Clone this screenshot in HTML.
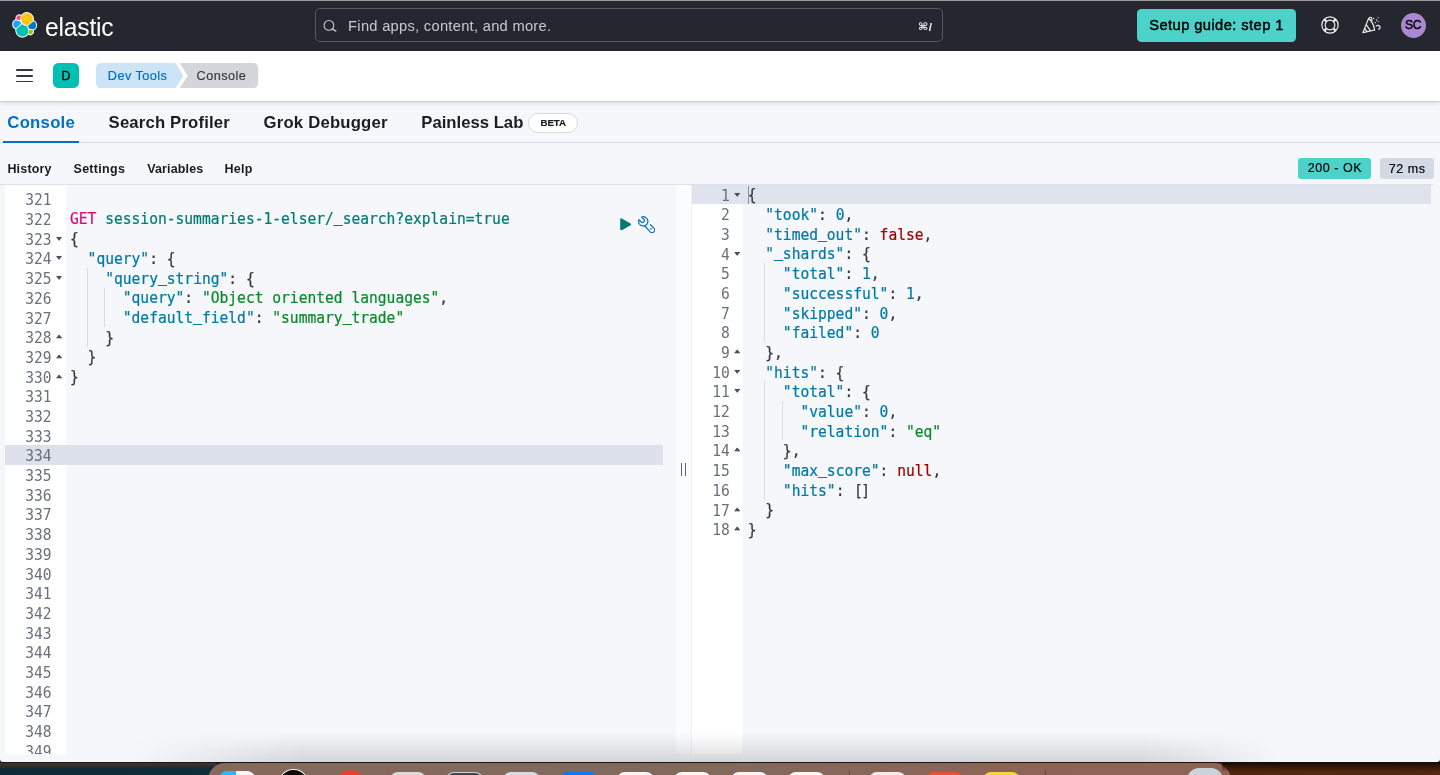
<!DOCTYPE html>
<html lang="en">
<head>
<meta charset="utf-8">
<title>Console - Dev Tools - Elastic</title>
<style>
*{box-sizing:border-box;margin:0;padding:0}
html,body{width:1440px;height:775px;overflow:hidden}
body{background:#1a2a33;font-family:"Liberation Sans",sans-serif;color:#1a1c21;position:relative}
.abs{position:absolute}
/* desktop strip under the browser window */
#desk{position:absolute;left:0;top:740px;width:1440px;height:35px;background:linear-gradient(to right,#0e2937 0,#102d3b 208px,#50260f 1231px,#52260f 1440px)}
#desk:before{content:"";position:absolute;left:0;top:21.500px;width:216px;height:6.400px;background:linear-gradient(to bottom,#3d3a38,#2a2725)}
#desk:after{content:"";position:absolute;left:1222px;top:21.500px;width:218px;height:10px;background:linear-gradient(to bottom,rgba(8,4,2,.95) 0,rgba(20,8,3,.7) 25%,rgba(30,12,4,0) 100%)}
#dock{position:absolute;left:207.500px;top:22.600px;width:1023px;height:40px;border-radius:17px;background:linear-gradient(to right,#86695b 0,#7f6a5d 38%,#86675a 62%,#8e6355 82%,#8f6254 100%)}
.dk{position:absolute;height:14px;border-radius:8px 8px 0 0}
.dks{position:absolute;top:7.500px;width:1px;height:10px;background:#5d4a42}
/* browser window */
#win{will-change:transform;position:absolute;left:0;top:0;width:1440px;height:761.500px;background:#f6f7fb;border-radius:0 0 3px 3px;overflow:hidden;box-shadow:0 .8px 0 .2px rgba(20,20,20,.9)}
#topline{position:absolute;left:0;top:0;width:1440px;height:1.4px;background:#9b9b9b}
#hdr1{position:absolute;left:0;top:1px;width:1440px;height:49.800px;background:#25272f}
#hdr2{position:absolute;left:0;top:50.800px;width:1440px;height:49.900px;background:#fff;box-shadow:0 1px 1.500px rgba(60,70,90,.2),0 3px 5px rgba(60,70,90,.1)}
.t{position:absolute;white-space:nowrap;line-height:1}

#logo{position:absolute;left:11.700px;top:11.200px;width:25.300px;height:25.800px}
#wordmark{position:absolute;left:44.500px;top:10.700px;font-size:26.2px;line-height:31px;color:#fff;letter-spacing:-.2px;transform:scaleX(.94);transform-origin:0 50%;white-space:nowrap}
#search{position:absolute;left:314.500px;top:7.400px;width:628.500px;height:33.800px;border:1.100px solid #565862;border-radius:4.800px;background:#25272f}
#search svg{position:absolute;left:7.600px;top:10.900px;width:15px;height:14px}
#ph{position:absolute;left:32.600px;top:8.400px;font-size:14.7px;line-height:17px;color:#c6c8cc;white-space:nowrap;letter-spacing:.28px}
#kbd{position:absolute;right:10px;top:10.300px;font-size:11.600px;line-height:14px;font-weight:bold;color:#f0f1f3;white-space:nowrap}
#kbd b{font-family:"DejaVu Sans","Liberation Sans",sans-serif;font-size:11px;position:relative;top:-.3px;margin-right:.5px;display:inline-block;transform:scaleY(.92)}
#guide{position:absolute;left:1136.7px;top:7.6px;width:159.4px;height:33.5px;border-radius:4.5px;background:#4dd2ca;color:#000}
#guidet{position:absolute;left:12.600px;top:8.900px;font-size:14.700px;line-height:17px;white-space:nowrap;letter-spacing:.42px;-webkit-text-stroke:.45px #000}
#help{position:absolute;left:1319.6px;top:14.350px;width:20px;height:20px}
#cheer{position:absolute;left:1361px;top:14px;width:20px;height:19px}
#avatar{position:absolute;left:1400.6px;top:11.6px;width:25.4px;height:25.4px;border-radius:50%;background:#a987d1}
#avt{position:absolute;left:0;top:6.2px;width:25.4px;text-align:center;font-size:12.200px;line-height:13px;color:#000;letter-spacing:-.5px;text-indent:-.5px;-webkit-text-stroke:.4px #000}

#burger{position:absolute;left:16px;top:18.4px;width:17px;height:14px}
#burger i{position:absolute;left:0;width:17px;height:1.8px;background:#343741;border-radius:1px}
#space{position:absolute;left:53.4px;top:12.4px;width:25.3px;height:25.3px;border-radius:5.5px;background:#00bfb3}
#spacet{position:absolute;left:0;top:6.6px;width:25.3px;text-align:center;font-size:12.4px;line-height:13px;color:#000;-webkit-text-stroke:.3px #000}
#crumbs{position:absolute;left:95.6px;top:12.4px;height:25.3px;width:170px}
#crumbs svg{position:absolute;left:0;top:0;width:170px;height:25.3px}
#bc1{position:absolute;left:12.2px;top:5.9px;font-size:12.7px;line-height:14px;color:#0071c2;letter-spacing:.46px;white-space:nowrap;-webkit-text-stroke:.2px #0071c2}
#bc2{position:absolute;left:101px;top:5.9px;font-size:12.7px;line-height:14px;color:#343741;letter-spacing:.43px;white-space:nowrap;-webkit-text-stroke:.15px #343741}

#tabs{position:absolute;left:0;top:101px;width:1440px;height:42.300px;border-bottom:1px solid #d3dae6}
.tab{position:absolute;top:12.3px;font-size:16.700px;line-height:20px;font-weight:bold;color:#1a1c21;white-space:nowrap}
#tab1{left:7.300px;color:#0071c2;letter-spacing:.28px}
#tabline{position:absolute;left:3.300px;top:39.700px;width:75.700px;height:2.300px;background:#0071c2}
#beta{position:absolute;left:528.300px;top:12.400px;width:49.800px;height:20.100px;border:1px solid #d3dae6;border-radius:10.100px;background:#fff}
#betat{position:absolute;left:0;top:3.700px;width:47.800px;text-align:center;font-size:9.700px;line-height:10px;font-weight:bold;letter-spacing:-.1px;-webkit-text-stroke:.2px #1a1c21;color:#1a1c21}
#menu{position:absolute;left:0;top:143.300px;width:1440px;height:41px}
.mi{position:absolute;top:18.300px;font-size:12.500px;line-height:15px;font-weight:bold;color:#1a1c21;white-space:nowrap}
#ok{position:absolute;left:1298.300px;top:14.500px;width:73px;height:20.800px;border-radius:3.200px;background:#4dd2ca}
#ms{position:absolute;left:1379.700px;top:15px;width:54.400px;height:20.300px;border-radius:3.200px;background:#d3dae6}
.bt{position:absolute;top:3.300px;left:0;width:100%;text-align:center;font-size:12.500px;line-height:14px;color:#000;white-space:nowrap;letter-spacing:.54px;text-indent:.5px;-webkit-text-stroke:.2px #000}#shade{position:absolute;left:130px;top:732px;width:1150px;height:30px;background:linear-gradient(to bottom,rgba(20,22,30,0) 0,rgba(20,22,30,.05) 35%,rgba(20,22,30,.115) 75%,rgba(20,22,30,.15) 100%);-webkit-mask-image:linear-gradient(to right,transparent 0,#000 15%,#000 88%,transparent 100%);mask-image:linear-gradient(to right,transparent 0,#000 15%,#000 88%,transparent 100%);pointer-events:none}/*ED*/
#edline{position:absolute;left:0;top:183.7px;width:1434px;height:1px;background:#dde2ea}
.ed{position:absolute;top:184.5px;height:569.1px;overflow:hidden;font-family:"DejaVu Sans Mono","Liberation Mono",monospace;font-size:14.62px;line-height:19.69px;color:#343741;-webkit-text-stroke:.22px currentColor}
#edL{left:4.5px;width:671.4px;background:#f5f7fa}
#edR{left:690.6px;width:743.4px;background:#f6f7fb}
.gut{position:absolute;left:0;top:0;height:100%;background:#fff;color:#69707d}
#edL .gut,.gutbg{width:61.2px}
.gutbg{position:absolute;left:0;top:0;height:100%;background:#fff}
#edR .gut{width:52.7px;border-left:1px solid #eef0f4}
.gr{position:absolute;left:0;width:100%;height:19.69px;-webkit-text-stroke:0;transform:scaleY(1.06);transform-origin:0 76%;padding-top:.7px;text-align:right;padding-right:14.1px;white-space:nowrap;letter-spacing:-0.002px}
#edR .gr{padding-right:13.4px}
.gr i{position:absolute;right:3.400px;width:6.400px;height:4px;background:#4a4f59}
#edR .gr i{right:2.900px}
.gr i.fo{top:8.100px;clip-path:polygon(0 0,100% 0,50% 100%)}
.gr i.fc{top:7.600px;clip-path:polygon(0 100%,100% 100%,50% 0)}
.cnt{position:absolute;top:0;height:100%}
#edL .cnt{left:61.5px;width:609.9px}
#edR .cnt{left:52.7px;width:687.5px;background:#f5f7fa}
.ln{position:absolute;left:0;width:100%;height:19.69px}
.ln pre{position:absolute;top:.4px;margin:0;transform:scaleY(1.05);transform-origin:0 76%;font:inherit;white-space:pre;letter-spacing:-0.002px}
#edR .ln pre{top:.9px}
.ln u{text-decoration:none;position:relative;top:-2.100px;-webkit-text-stroke:.5px currentColor}
.ig{position:absolute;top:0;width:1px;height:19.69px;background:#d8dbe1}
.hl{position:absolute;left:0;height:19.69px;background:#dde1ec}
.mt{color:#dd0a73}.ur{color:#017d73}.k{color:#0079a5}.s{color:#0a8a2a}.n{color:#0079a5}.b{color:#a30000}.p{color:#343741}
#resz{position:absolute;left:675.9px;top:184.5px;width:14.7px;height:569.1px;background:#fbfcfd}
#resz i{position:absolute;top:278.8px;width:1.1px;height:12.3px;background:#5e646f}
#cursor{position:absolute;left:4.3px;top:1.5px;width:1.6px;height:17.5px;background:#8d9097}
/*/ED*/
</style>
</head>
<body>
<div id="desk"><div id="dock"><i class="dk" style="left:11.5px;top:8.5px;width:36.4px;background:linear-gradient(to right,#2bb7f3 0,#2bb7f3 47%,#f4f6f8 47%)"></i><i class="dk" style="left:71.2px;top:6.4px;width:29.2px;background:#0b0b0c;border:1.700px solid #f3f3f3;border-bottom:0;border-radius:15px 15px 0 0"></i><i class="dk" style="left:128.1px;top:7.4px;width:29.1px;background:#e8402c;border-radius:15px 15px 0 0"></i><i class="dk" style="left:182.0px;top:9.7px;width:36.5px;background:#dcdad9"></i><i class="dk" style="left:238.9px;top:9.4px;width:36.4px;background:#3c4450;border:1.300px solid #cfd6dc;border-bottom:0"></i><i class="dk" style="left:295.7px;top:9.8px;width:36.5px;background:#d3dde3"></i><i class="dk" style="left:352.5px;top:9.4px;width:36.5px;background:#0a79f2"></i><i class="dk" style="left:409.5px;top:9.6px;width:37px;background:#f6f6f6"></i><i class="dk" style="left:466.5px;top:9.6px;width:37px;background:#f7f7f7"></i><i class="dk" style="left:523.5px;top:9.6px;width:37px;background:#f6f6f6"></i><i class="dk" style="left:580.5px;top:9.6px;width:37px;background:#f7f7f7"></i><i class="dk" style="left:661.5px;top:9.7px;width:37px;background:#eeecec"></i><i class="dk" style="left:718.5px;top:9.2px;width:37px;background:#e9522f"></i><i class="dk" style="left:775.5px;top:9.2px;width:37px;background:#f4d63c"></i><i class="dk" style="left:979.5px;top:5.9px;width:36px;background:#c9d3d8;border-radius:12px 12px 0 0"></i><i class="dks" style="left:641.500px"></i><i class="dks" style="left:837.500px"></i></div></div>
<div id="win">
  <div id="hdr1">
    <svg id="logo" viewBox="-.4 -.2 32.800 32.500" preserveAspectRatio="none" aria-hidden="true">
      <g fill="#fff" stroke="#fff" stroke-width="2.600" stroke-linejoin="round"><path d="M8 8h16v16h-16z"/><path d="M12.600 13.800l7 3.200 7.100-6.200a7.900 7.900 0 0 0-5.400-9.100 7.900 7.900 0 0 0-10.200 5.100z"/><path d="M5.300 21.200a7.900 7.900 0 0 0 5.400 9.100 7.900 7.900 0 0 0 10.200-5.100l-1.400-6.700-7-3.200z"/><path d="M5.300 9.100l4.800 1.100 1-5.400a3.800 3.800 0 0 0-5.800 4.300z"/><path d="M4.900 10.200a5.500 5.500 0 0 0-.2 10.400l6.800-6.100-1.300-2.600z"/><path d="M20.900 27.200a3.800 3.800 0 0 0 5.800-4.300l-4.800-1.100z"/><path d="M21.800 20.500l5.300 1.300a5.500 5.500 0 0 0 .2-10.400l-7 6z"/></g>
      <path fill="#fec514" d="M12.600 13.800l7 3.200 7.100-6.200a7.900 7.900 0 0 0-5.400-9.100 7.900 7.900 0 0 0-10.200 5.100z"/>
      <path fill="#00bfb3" d="M5.300 21.200a7.900 7.900 0 0 0 5.400 9.100 7.900 7.900 0 0 0 10.200-5.100l-1.400-6.700-7-3.200z"/>
      <path fill="#f04e98" d="M5.300 9.100l4.800 1.100 1-5.400a3.800 3.800 0 0 0-5.800 4.300z"/>
      <path fill="#1ba9f5" d="M4.900 10.200a5.500 5.500 0 0 0-.2 10.400l6.800-6.100-1.300-2.600z"/>
      <path fill="#93c90e" d="M20.900 27.200a3.800 3.800 0 0 0 5.800-4.300l-4.800-1.100z"/>
      <path fill="#0077cc" d="M21.800 20.500l5.300 1.300a5.500 5.500 0 0 0 .2-10.400l-7 6z"/>
    </svg>
    <div id="wordmark">elastic</div>
    <div id="search">
      <svg viewBox="0 0 15 14" aria-hidden="true"><circle cx="5.900" cy="5.400" r="4.850" fill="none" stroke="#c9cbcf" stroke-width="1.100"/><path d="M9.300 8.900l3.500 2.200" stroke="#c9cbcf" stroke-width="1.300" fill="none" stroke-linecap="round"/></svg>
      <div id="ph">Find apps, content, and more.</div>
      <div id="kbd"><b>&#8984;</b>/</div>
    </div>
    <div id="guide"><div id="guidet">Setup guide: step 1</div></div>
    <svg id="help" viewBox="0 0 20 20" aria-hidden="true"><g fill="none" stroke="#f2f3f5"><circle cx="10" cy="10" r="8.150" stroke-width="1.150"/><circle cx="10" cy="10" r="4.850" stroke-width="1.150"/><path stroke-width="2.300" d="M13.700 13.700l1.900 1.900M6.300 13.700l-1.900 1.900M13.700 6.300l1.900-1.900M6.300 6.300L4.400 4.400"/></g></svg>
    <svg id="cheer" viewBox="0 0 20 19" aria-hidden="true"><g fill="none" stroke="#f2f3f5" stroke-width="1.150" stroke-linejoin="round" stroke-linecap="round"><path d="M7.400 3.900L1.900 17.600 13.600 15"/><path d="M7.400 3.900c2 .3 5.600 5.300 6.200 11.100"/><path d="M5.400 9.800l4 5.800M3.900 13.600l2.100 3"/><path d="M8 3.500c.2-1.500 2-1.700 2.600-.4.400.9.100 1.600.4 2.500"/><path d="M15.300 10.900c1.100-.9 2.700-.7 3.500.5.600 1.100.1 2.300-1 2.900"/></g><g fill="#f2f3f5"><circle cx="12.700" cy="3.400" r=".65"/><circle cx="15.500" cy="5" r=".65"/><circle cx="17.100" cy="2.600" r=".6"/><circle cx="14.200" cy="7.700" r=".65"/><circle cx="17.100" cy="6.300" r=".6"/></g></svg>
    <div id="avatar"><div id="avt">SC</div></div>
  </div>
  <div id="topline"></div>
  <div id="hdr2">
    <div id="burger"><i style="top:0"></i><i style="top:5.7px"></i><i style="top:11.4px"></i></div>
    <div id="space"><div id="spacet">D</div></div>
    <div id="crumbs">
      <svg viewBox="0 0 170 25.3" aria-hidden="true">
        <path fill="#cce4f5" d="M5 0H79.500L87.500 12.650 79.500 25.300H5A5 5 0 0 1 0 20.300V5A5 5 0 0 1 5 0z"/>
        <path fill="#d5d6d9" d="M83.700 0H157.200A5 5 0 0 1 162.200 5V20.300A5 5 0 0 1 157.200 25.300H83.700L91.700 12.650z"/>
      </svg>
      <div id="bc1">Dev Tools</div>
      <div id="bc2">Console</div>
    </div>
  </div>
  <div id="tabs">
    <div class="tab" id="tab1">Console</div>
    <div class="tab" id="tab2" style="left:108.600px;letter-spacing:.17px">Search Profiler</div>
    <div class="tab" id="tab3" style="left:263.500px;letter-spacing:.21px">Grok Debugger</div>
    <div class="tab" id="tab4" style="left:421.300px">Painless Lab</div>
    <div id="beta"><div id="betat">BETA</div></div>
    <div id="tabline"></div>
  </div>
<!--ED-->
  <div id="edline"></div>
  <div class="ed" id="edL">
    <div class="gutbg"></div>
    <div class="hl" style="top:260.86px;width:658.5px"></div>
    <div class="gut" style="background:transparent">
<div class="gr" style="top:-15.90px">320</div>
<div class="gr" style="top:4.89px">321</div>
<div class="gr" style="top:24.58px">322</div>
<div class="gr" style="top:44.27px">323<i class="fo"></i></div>
<div class="gr" style="top:63.96px">324<i class="fo"></i></div>
<div class="gr" style="top:83.65px">325<i class="fo"></i></div>
<div class="gr" style="top:103.34px">326</div>
<div class="gr" style="top:123.03px">327</div>
<div class="gr" style="top:142.72px">328<i class="fc"></i></div>
<div class="gr" style="top:162.41px">329<i class="fc"></i></div>
<div class="gr" style="top:182.10px">330<i class="fc"></i></div>
<div class="gr" style="top:201.79px">331</div>
<div class="gr" style="top:221.48px">332</div>
<div class="gr" style="top:241.17px">333</div>
<div class="gr" style="top:260.86px">334</div>
<div class="gr" style="top:280.55px">335</div>
<div class="gr" style="top:300.24px">336</div>
<div class="gr" style="top:319.93px">337</div>
<div class="gr" style="top:339.62px">338</div>
<div class="gr" style="top:359.31px">339</div>
<div class="gr" style="top:379.00px">340</div>
<div class="gr" style="top:398.69px">341</div>
<div class="gr" style="top:418.38px">342</div>
<div class="gr" style="top:438.07px">343</div>
<div class="gr" style="top:457.76px">344</div>
<div class="gr" style="top:477.45px">345</div>
<div class="gr" style="top:497.14px">346</div>
<div class="gr" style="top:516.83px">347</div>
<div class="gr" style="top:536.52px">348</div>
<div class="gr" style="top:556.21px">349</div>
    </div>
    <div class="cnt">
<div class="ln" style="top:24.58px"><pre style="left:4.0px"><span class="mt">GET</span> <span class="ur">session-summaries-1-elser/<u>_</u>search?explain=true</span></pre></div>
<div class="ln" style="top:44.27px"><pre style="left:4.0px"><span class="p">{</span></pre></div>
<div class="ln" style="top:63.96px"><pre style="left:4.0px">  <span class="k">"query"</span><span class="p">: {</span></pre></div>
<div class="ln" style="top:83.65px"><i class="ig" style="left:20.60px"></i><pre style="left:4.0px">    <span class="k">"query<u>_</u>string"</span><span class="p">: {</span></pre></div>
<div class="ln" style="top:103.34px"><i class="ig" style="left:20.60px"></i><i class="ig" style="left:38.20px"></i><pre style="left:4.0px">      <span class="k">"query"</span><span class="p">: </span><span class="s">"Object oriented languages"</span><span class="p">,</span></pre></div>
<div class="ln" style="top:123.03px"><i class="ig" style="left:20.60px"></i><i class="ig" style="left:38.20px"></i><pre style="left:4.0px">      <span class="k">"default<u>_</u>field"</span><span class="p">: </span><span class="s">"summary<u>_</u>trade"</span></pre></div>
<div class="ln" style="top:142.72px"><i class="ig" style="left:20.60px"></i><pre style="left:4.0px">    <span class="p">}</span></pre></div>
<div class="ln" style="top:162.41px"><pre style="left:4.0px">  <span class="p">}</span></pre></div>
<div class="ln" style="top:182.10px"><pre style="left:4.0px"><span class="p">}</span></pre></div>
      <svg id="play" style="position:absolute;left:553.850px;top:33.200px" width="11.200" height="12.800" viewBox="0 0 11.200 12.800" aria-hidden="true"><path d="M1.200 1.300L10.100 6.400 1.200 11.500z" fill="#07796f" stroke="#07796f" stroke-width="2" stroke-linejoin="round"/></svg>
      <svg id="wrench" style="position:absolute;left:571.800px;top:31.350px" width="17.400" height="17.400" viewBox="0 0 17.400 17.400" aria-hidden="true"><g fill="none" stroke="#1272c6" stroke-width="1.250" stroke-linecap="round" stroke-linejoin="round"><path d="M3.660 1L5.850 3.190A1.890 1.890 0 0 1 3.130 5.820L.940 3.630A4.650 4.650 0 1 0 3.660 1z"/><path d="M6.690 9.790L12.160 15.840A2.600 2.600 0 0 0 15.840 12.160L12.400 8.700"/></g><circle cx="12.900" cy="12.800" r=".85" fill="#1272c6"/></svg>
    </div>
  </div>
  <div id="resz"><i style="left:5.200px"></i><i style="left:9px"></i></div>
  <div class="ed" id="edR">
    <div class="hl" style="top:0;left:0;width:740.2px;background:#dfe3ed"></div>
    <div class="gut" style="background:transparent"><div style="position:absolute;left:0;top:19.69px;width:100%;bottom:0;background:#fff"></div>
<div class="gr" style="top:0.00px">1<i class="fo"></i></div>
<div class="gr" style="top:19.69px">2</div>
<div class="gr" style="top:39.38px">3</div>
<div class="gr" style="top:59.07px">4<i class="fo"></i></div>
<div class="gr" style="top:78.76px">5</div>
<div class="gr" style="top:98.45px">6</div>
<div class="gr" style="top:118.14px">7</div>
<div class="gr" style="top:137.83px">8</div>
<div class="gr" style="top:157.52px">9<i class="fc"></i></div>
<div class="gr" style="top:177.21px">10<i class="fo"></i></div>
<div class="gr" style="top:196.90px">11<i class="fo"></i></div>
<div class="gr" style="top:216.59px">12</div>
<div class="gr" style="top:236.28px">13</div>
<div class="gr" style="top:255.97px">14<i class="fc"></i></div>
<div class="gr" style="top:275.66px">15</div>
<div class="gr" style="top:295.35px">16</div>
<div class="gr" style="top:315.04px">17<i class="fc"></i></div>
<div class="gr" style="top:334.73px">18<i class="fc"></i></div>
    </div>
    <div class="cnt" style="background:transparent"><div style="position:absolute;left:0;top:19.69px;width:100%;bottom:0;background:#f5f7fa"></div>
<div class="ln" style="top:0.00px"><pre style="left:4.4px"><span class="p">{</span></pre></div>
<div class="ln" style="top:19.69px"><pre style="left:4.4px">  <span class="k">"took"</span><span class="p">: </span><span class="n">0</span><span class="p">,</span></pre></div>
<div class="ln" style="top:39.38px"><pre style="left:4.4px">  <span class="k">"timed<u>_</u>out"</span><span class="p">: </span><span class="b">false</span><span class="p">,</span></pre></div>
<div class="ln" style="top:59.07px"><pre style="left:4.4px">  <span class="k">"<u>_</u>shards"</span><span class="p">: {</span></pre></div>
<div class="ln" style="top:78.76px"><i class="ig" style="left:21.00px"></i><pre style="left:4.4px">    <span class="k">"total"</span><span class="p">: </span><span class="n">1</span><span class="p">,</span></pre></div>
<div class="ln" style="top:98.45px"><i class="ig" style="left:21.00px"></i><pre style="left:4.4px">    <span class="k">"successful"</span><span class="p">: </span><span class="n">1</span><span class="p">,</span></pre></div>
<div class="ln" style="top:118.14px"><i class="ig" style="left:21.00px"></i><pre style="left:4.4px">    <span class="k">"skipped"</span><span class="p">: </span><span class="n">0</span><span class="p">,</span></pre></div>
<div class="ln" style="top:137.83px"><i class="ig" style="left:21.00px"></i><pre style="left:4.4px">    <span class="k">"failed"</span><span class="p">: </span><span class="n">0</span></pre></div>
<div class="ln" style="top:157.52px"><pre style="left:4.4px">  <span class="p">},</span></pre></div>
<div class="ln" style="top:177.21px"><pre style="left:4.4px">  <span class="k">"hits"</span><span class="p">: {</span></pre></div>
<div class="ln" style="top:196.90px"><i class="ig" style="left:21.00px"></i><pre style="left:4.4px">    <span class="k">"total"</span><span class="p">: {</span></pre></div>
<div class="ln" style="top:216.59px"><i class="ig" style="left:21.00px"></i><i class="ig" style="left:38.60px"></i><pre style="left:4.4px">      <span class="k">"value"</span><span class="p">: </span><span class="n">0</span><span class="p">,</span></pre></div>
<div class="ln" style="top:236.28px"><i class="ig" style="left:21.00px"></i><i class="ig" style="left:38.60px"></i><pre style="left:4.4px">      <span class="k">"relation"</span><span class="p">: </span><span class="s">"eq"</span></pre></div>
<div class="ln" style="top:255.97px"><i class="ig" style="left:21.00px"></i><pre style="left:4.4px">    <span class="p">},</span></pre></div>
<div class="ln" style="top:275.66px"><i class="ig" style="left:21.00px"></i><pre style="left:4.4px">    <span class="k">"max<u>_</u>score"</span><span class="p">: </span><span class="b">null</span><span class="p">,</span></pre></div>
<div class="ln" style="top:295.35px"><i class="ig" style="left:21.00px"></i><pre style="left:4.4px">    <span class="k">"hits"</span><span class="p">: </span><span class="p" style="position:relative;left:.9px">[</span><span class="p" style="position:relative;left:-.9px">]</span></pre></div>
<div class="ln" style="top:315.04px"><pre style="left:4.4px">  <span class="p">}</span></pre></div>
<div class="ln" style="top:334.73px"><pre style="left:4.4px"><span class="p">}</span></pre></div>
      <div id="cursor"></div>
    </div>
  </div>
<!--/ED-->
  <div id="menu">
    <div class="mi" id="mi1" style="left:7.400px;letter-spacing:.18px">History</div>
    <div class="mi" id="mi2" style="left:73.500px;letter-spacing:.29px">Settings</div>
    <div class="mi" id="mi3" style="left:147.200px;letter-spacing:.14px">Variables</div>
    <div class="mi" id="mi4" style="left:224.500px;letter-spacing:.23px">Help</div>
    <div id="ok"><div class="bt" id="okt">200 - OK</div></div>
    <div id="ms"><div class="bt" id="mst">72 ms</div></div>
  </div>
  <div id="shade"></div>
</div>
</body>
</html>
